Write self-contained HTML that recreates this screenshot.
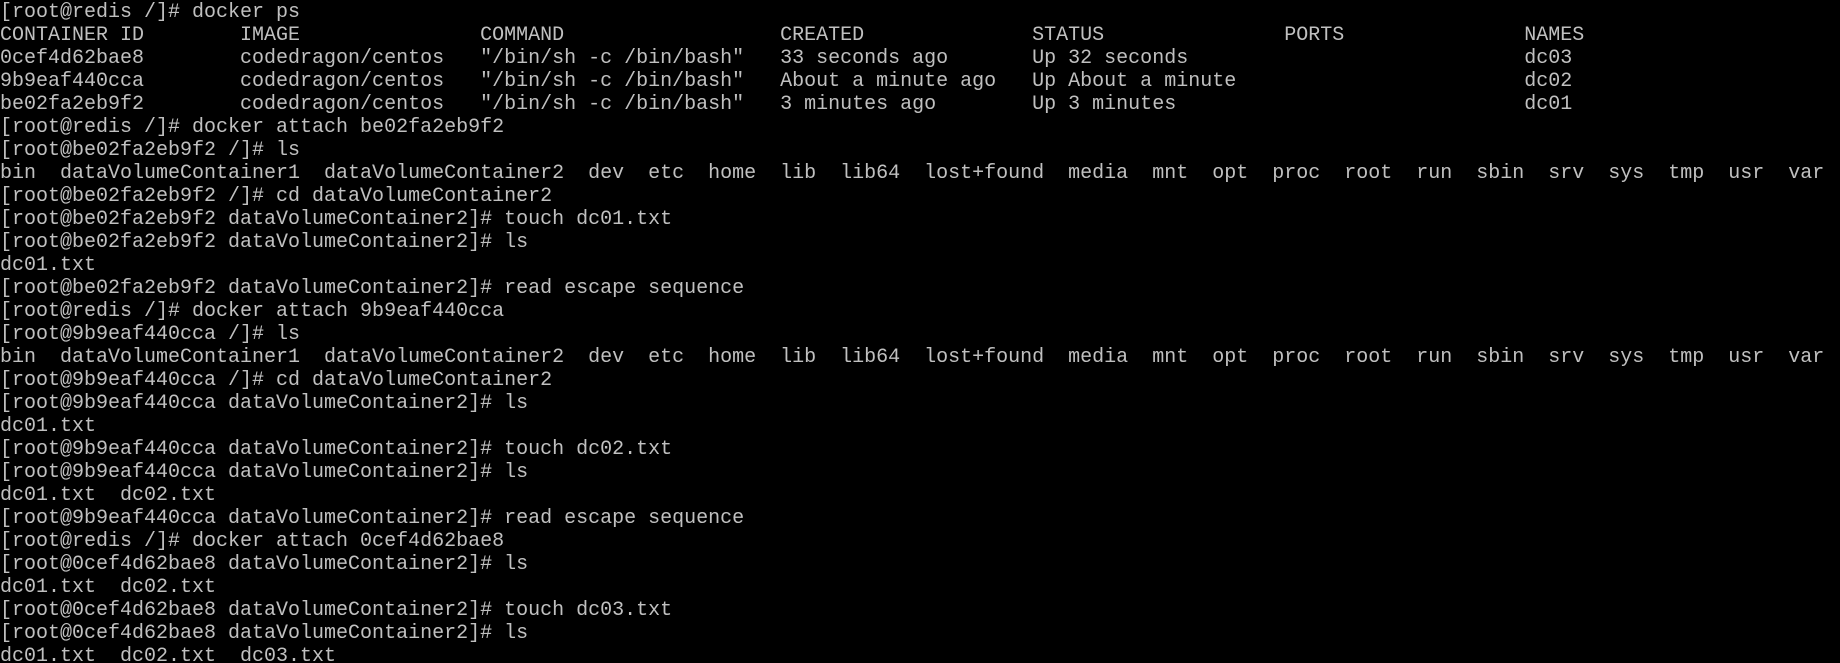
<!DOCTYPE html>
<html><head><meta charset="utf-8"><style>
html,body{margin:0;padding:0;background:#000;width:1840px;height:663px;overflow:hidden}
pre{margin:0;padding:1px 0 0 0;font-family:"Liberation Mono",monospace;font-size:20px;line-height:23px;color:#c0c0c0;white-space:pre}
</style></head><body><pre>[root@redis /]# docker ps
CONTAINER ID        IMAGE               COMMAND                  CREATED              STATUS               PORTS               NAMES
0cef4d62bae8        codedragon/centos   "/bin/sh -c /bin/bash"   33 seconds ago       Up 32 seconds                            dc03
9b9eaf440cca        codedragon/centos   "/bin/sh -c /bin/bash"   About a minute ago   Up About a minute                        dc02
be02fa2eb9f2        codedragon/centos   "/bin/sh -c /bin/bash"   3 minutes ago        Up 3 minutes                             dc01
[root@redis /]# docker attach be02fa2eb9f2
[root@be02fa2eb9f2 /]# ls
bin  dataVolumeContainer1  dataVolumeContainer2  dev  etc  home  lib  lib64  lost+found  media  mnt  opt  proc  root  run  sbin  srv  sys  tmp  usr  var
[root@be02fa2eb9f2 /]# cd dataVolumeContainer2
[root@be02fa2eb9f2 dataVolumeContainer2]# touch dc01.txt
[root@be02fa2eb9f2 dataVolumeContainer2]# ls
dc01.txt
[root@be02fa2eb9f2 dataVolumeContainer2]# read escape sequence
[root@redis /]# docker attach 9b9eaf440cca
[root@9b9eaf440cca /]# ls
bin  dataVolumeContainer1  dataVolumeContainer2  dev  etc  home  lib  lib64  lost+found  media  mnt  opt  proc  root  run  sbin  srv  sys  tmp  usr  var
[root@9b9eaf440cca /]# cd dataVolumeContainer2
[root@9b9eaf440cca dataVolumeContainer2]# ls
dc01.txt
[root@9b9eaf440cca dataVolumeContainer2]# touch dc02.txt
[root@9b9eaf440cca dataVolumeContainer2]# ls
dc01.txt  dc02.txt
[root@9b9eaf440cca dataVolumeContainer2]# read escape sequence
[root@redis /]# docker attach 0cef4d62bae8
[root@0cef4d62bae8 dataVolumeContainer2]# ls
dc01.txt  dc02.txt
[root@0cef4d62bae8 dataVolumeContainer2]# touch dc03.txt
[root@0cef4d62bae8 dataVolumeContainer2]# ls
dc01.txt  dc02.txt  dc03.txt</pre></body></html>
